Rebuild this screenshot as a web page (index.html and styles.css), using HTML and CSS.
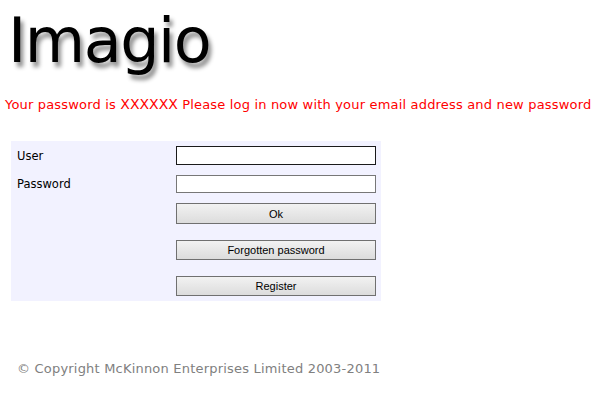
FILE: index.html
```html
<!DOCTYPE html>
<html lang="en">
<head>
    <meta charset="UTF-8">
    <title>Imagio - Log in</title>
    <link rel="stylesheet" href="styles.css">
</head>
<body>
    <div class="logo">Imagio</div>

    <p class="message">Your password is <span class="code">XXXXXX</span> Please log in now with your email address and new password</p>

    <!-- Login panel -->
    <form class="login" onsubmit="event.preventDefault();">
        <label for="user">User</label>
        <input type="text" id="user" class="field" autofocus>
        <label for="password">Password</label>
        <input type="password" id="password" class="field">
        <button type="submit" class="btn ok">Ok</button>
        <button type="button" class="btn gap">Forgotten password</button>
        <button type="button" class="btn gap">Register</button>
    </form>

    <p class="copyright">&copy; Copyright McKinnon Enterprises Limited 2003-2011</p>
</body>
</html>
```

FILE: styles.css
```css
body {
    margin: 0;
    background: #fff;
    font-family: "DejaVu Sans", Verdana, sans-serif;
}
.logo {
    height: 94px;
    padding-left: 8px;
    font-size: 62px;
    line-height: 82px;
    letter-spacing: -1.5px;
    color: #000;
    text-shadow: 3px 5px 4px rgba(0, 0, 0, 0.45);
}
.message {
    margin: 0;
    padding-left: 5px;
    font-size: 13px;
    line-height: 20px;
    letter-spacing: 0.18px;
    color: #ff0000;
}
.message .code {
    font-size: 14px;
    letter-spacing: 0;
}
.login {
    display: grid;
    grid-template-columns: 159px 200px;
    align-items: center;
    row-gap: 10px;
    width: 364px;
    margin: 26px 0 0 11px;
    padding: 5px 0 5px 6px;
    background: #f2f2ff;
}
.login label {
    font-size: 11.5px;
    color: #000;
}
.field {
    box-sizing: border-box;
    width: 200px;
    height: 19px;
    margin: 0;
    padding: 0 2px;
    border: 1px solid #777;
    background: #fff;
    font-size: 12px;
    outline: none;
}
#user {
    border-color: #1a1a1a;
}
#password {
    height: 18px;
}
.btn {
    grid-column: 2;
    box-sizing: border-box;
    width: 200px;
    height: 20px;
    margin: 0;
    padding: 0;
    border: 1px solid #707070;
    border-radius: 0;
    background: linear-gradient(#f2f2f2, #dcdcdc);
    font-family: "Liberation Sans", Arial, sans-serif;
    font-size: 11px;
    color: #000;
}
.ok {
    height: 21px;
}
.gap {
    margin-top: 6px;
}
.copyright {
    margin: 60px 0 0 17px;
    font-size: 13px;
    letter-spacing: 0.2px;
    color: #808080;
}
```
